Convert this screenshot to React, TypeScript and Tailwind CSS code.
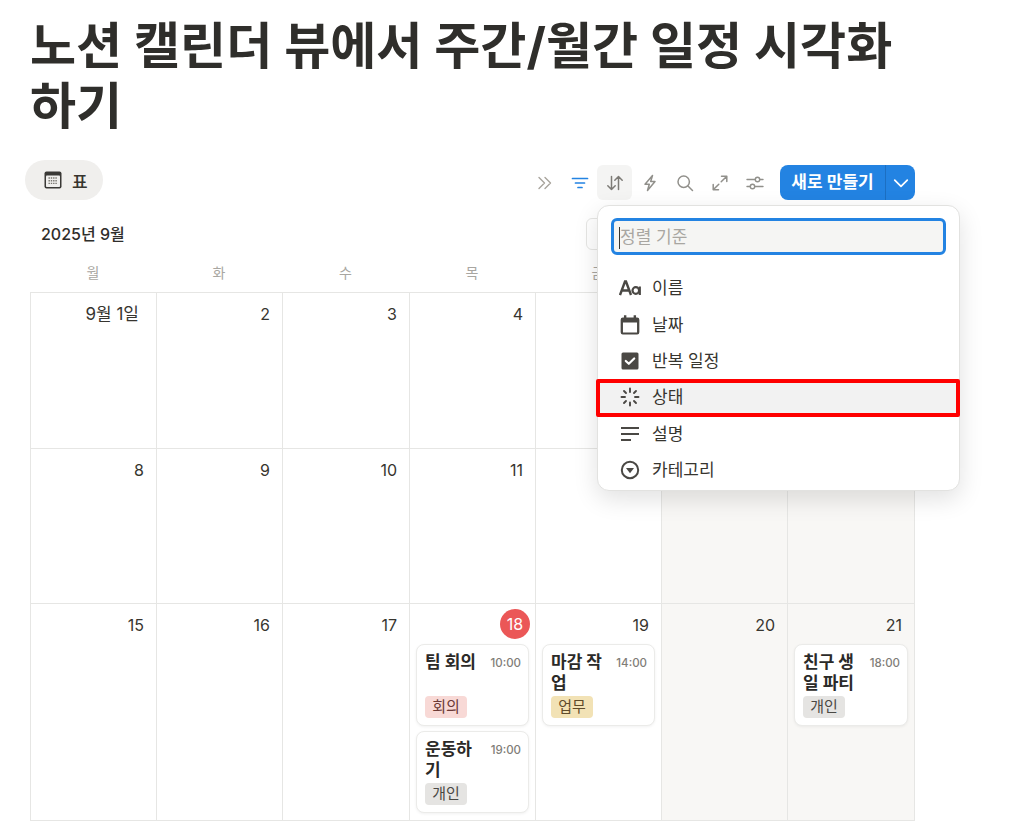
import React from "react";

const font = { fontFamily: 'Inter, "Noto Sans CJK KR", sans-serif' };

const ToolIcon = ({ children, active }: { children: React.ReactNode; active?: boolean }) => (
  <div className={`w-[35px] h-[35px] flex items-center justify-center rounded-md ${active ? "bg-[#f4f4f3]" : ""}`}>{children}</div>
);

const stroke = { fill: "none", stroke: "#91908b", strokeWidth: 1.5, strokeLinecap: "round" as const, strokeLinejoin: "round" as const };

const Toolbar = () => (
  <div className="flex items-center">
    <ToolIcon>
      <svg width="20" height="20" viewBox="0 0 20 20" {...stroke} stroke="#a8a49c" strokeWidth={1.4}>
        <path d="M4 4.500 9.500 10 4 15.500M10 4.500 15.500 10 10 15.500" />
      </svg>
    </ToolIcon>
    <ToolIcon>
      <svg width="20" height="20" viewBox="0 0 20 20" fill="none" stroke="#2383e2" strokeWidth="1.7" strokeLinecap="round">
        <path d="M2.500 5.500h15M5.500 10h9M8 14.500h4" />
      </svg>
    </ToolIcon>
    <ToolIcon active>
      <svg width="20" height="20" viewBox="0 0 20 20" {...stroke} stroke="#7d7b76">
        <path d="M6.500 3.500v13M2.800 12.800l3.700 3.700 3.700-3.700M13.500 16.500v-13M9.800 7.200l3.700-3.700 3.700 3.700" />
      </svg>
    </ToolIcon>
    <ToolIcon>
      <svg width="20" height="20" viewBox="0 0 20 20" {...stroke}>
        <path d="M12.500 2.500 5 11.200h4.300l-1.800 6.300 7.500-9h-4.300z" />
      </svg>
    </ToolIcon>
    <ToolIcon>
      <svg width="20" height="20" viewBox="0 0 20 20" {...stroke}>
        <circle cx="8.700" cy="8.700" r="5.700" />
        <path d="m13 13 4.500 4.500" />
      </svg>
    </ToolIcon>
    <ToolIcon>
      <svg width="20" height="20" viewBox="0 0 20 20" {...stroke}>
        <path d="M11.500 3.200h5.300v5.300M16.800 3.200l-5.600 5.600M8.500 16.800H3.200v-5.300M3.200 16.800l5.600-5.600" />
      </svg>
    </ToolIcon>
    <ToolIcon>
      <svg width="20" height="20" viewBox="0 0 20 20" {...stroke} strokeWidth={1.4}>
        <path d="M2 6.500h8M15 6.500h3M2 13.500h3M10 13.500h8" />
        <circle cx="12.500" cy="6.500" r="2.200" />
        <circle cx="7.500" cy="13.500" r="2.200" />
      </svg>
    </ToolIcon>
  </div>
);

const tagStyles: Record<string, string> = {
  회의: "bg-[#f8d9d6] text-[#6b3a36]",
  업무: "bg-[#f2e2b5] text-[#5f4b2a]",
  개인: "bg-[#e5e4e2] text-[#4a4844]",
};

const Card = ({ title, time, tag }: { title: string; time: string; tag: string }) => (
  <div className="h-[82px] rounded-lg bg-white border border-[#ebebe9] shadow-[0_1px_3px_rgba(0,0,0,0.06)] pl-2 pr-[7px] pt-[7px] pb-[7px] flex flex-col">
    <div className="flex items-start justify-between">
      <div className="w-[56px] text-[17px] leading-[21px] font-bold text-[#2b2a28]">{title}</div>
      <div className="pt-[1px] text-[11.5px] leading-[21px] font-medium text-[#7f7d78] shrink-0">{time}</div>
    </div>
    <div className="mt-auto">
      <span className={`inline-flex items-center justify-center w-[42px] h-[22px] rounded text-[15px] ${tagStyles[tag]}`}>{tag}</span>
    </div>
  </div>
);

type CellData = { label: string; today?: boolean; weekend?: boolean; wide?: boolean; cards?: { title: string; time: string; tag: string }[] };

const Cell = ({ c }: { c: CellData }) => (
  <div className={`border-l border-[#e6e6e4] ${c.weekend ? "bg-[#f8f7f5]" : "bg-white"} min-w-0 pl-[6px] pr-[6px]`}>
    <div className="h-[40px] flex items-start justify-end pt-[6px]">
      {c.today ? (
        <span className="w-[30px] h-[30px] -mt-[1px] -mr-[1px] rounded-full bg-[#eb5757] text-white text-[16px] flex items-center justify-center">{c.label}</span>
      ) : (
        <span className={`leading-[30px] text-[#37352f] ${c.wide ? "text-[17px] pr-[11px]" : "text-[16px] pr-[6px]"}`}>{c.label}</span>
      )}
    </div>
    <div className="flex flex-col gap-[5px]">
      {c.cards?.map((k) => <Card key={k.title} {...k} />)}
    </div>
  </div>
);

const rows: { h: string; cells: CellData[] }[] = [
  {
    h: "h-[156px]",
    cells: [
      { label: "9월 1일", wide: true }, { label: "2" }, { label: "3" }, { label: "4" }, { label: "5" },
      { label: "6", weekend: true }, { label: "7", weekend: true },
    ],
  },
  {
    h: "h-[155px]",
    cells: [
      { label: "8" }, { label: "9" }, { label: "10" }, { label: "11" }, { label: "12" },
      { label: "13", weekend: true }, { label: "14", weekend: true },
    ],
  },
  {
    h: "h-[217px]",
    cells: [
      { label: "15" }, { label: "16" }, { label: "17" },
      {
        label: "18",
        today: true,
        cards: [
          { title: "팀 회의", time: "10:00", tag: "회의" },
          { title: "운동하기", time: "19:00", tag: "개인" },
        ],
      },
      { label: "19", cards: [{ title: "마감 작업", time: "14:00", tag: "업무" }] },
      { label: "20", weekend: true },
      { label: "21", weekend: true, cards: [{ title: "친구 생일 파티", time: "18:00", tag: "개인" }] },
    ],
  },
];

const ic = "#4a4844";
const menuItems: { label: string; icon: React.ReactNode; hl?: boolean }[] = [
  {
    label: "이름",
    icon: (
      <svg width="22" height="16" viewBox="0 0 22 16" fill="none" stroke={ic} strokeWidth="2.400">
        <path d="M1 15 6 1.500h1L12 15M2.800 10.500h7.600" />
        <circle cx="16.800" cy="10.500" r="3.300" strokeWidth="2.200" />
        <path d="M20.800 6.500V15" strokeWidth="2.200" />
      </svg>
    ),
  },
  {
    label: "날짜",
    icon: (
      <svg width="22" height="22" viewBox="0 0 20 20" fill={ic}>
        <path d="M4.500 1.200h2.200v2h6.600v-2h2.200v2h1a2 2 0 0 1 2 2v11.500a2 2 0 0 1-2 2H3.500a2 2 0 0 1-2-2V5.200a2 2 0 0 1 2-2h1zM3.600 7.800v9h12.800v-9z" fillRule="evenodd" />
      </svg>
    ),
  },
  {
    label: "반복 일정",
    icon: (
      <svg width="20" height="20" viewBox="0 0 20 20">
        <rect x="1.500" y="1.500" width="17" height="17" rx="1.500" fill={ic} />
        <path d="m5.800 10 3 2.800L14.200 7.500" fill="none" stroke="#fff" strokeWidth="2.200" strokeLinecap="round" strokeLinejoin="round" />
      </svg>
    ),
  },
  {
    label: "상태",
    hl: true,
    icon: (
      <svg width="20" height="20" viewBox="0 0 20 20" fill="none" stroke={ic} strokeWidth="1.900" strokeLinecap="round">
        <path d="M10 1.500v3.500M16 4l-2 2M18.500 10h-3.500M16 16l-2-2M10 18.500V15.500M4 16l2-2M1.500 10H5M4 4l2 2" />
      </svg>
    ),
  },
  {
    label: "설명",
    icon: (
      <svg width="20" height="20" viewBox="0 0 20 20" fill="none" stroke={ic} strokeWidth="2">
        <path d="M1 4h18M1 10h18M1 16h10" />
      </svg>
    ),
  },
  {
    label: "카테고리",
    icon: (
      <svg width="20" height="20" viewBox="0 0 20 20">
        <circle cx="10" cy="10" r="8.200" fill="none" stroke={ic} strokeWidth="2" />
        <path d="M6 8h8l-4 5.200z" fill={ic} />
      </svg>
    ),
  },
];

const SortMenu = () => (
  <div className="absolute left-[597px] top-[205px] w-[363px] h-[286px] rounded-xl bg-white border border-[#e2e2e0] shadow-[0_8px_24px_rgba(0,0,0,0.12)] px-[13px] pt-[12px]">
    <div className="h-[37px] rounded-md bg-[#f5f5f3] border-[3px] border-[#2383e2] flex items-center pl-[5px] pt-[3px]">
      <span className="w-px h-[22px] bg-[#37352f]" />
      <span className="text-[17px] text-[#a8a6a1]">정렬 기준</span>
    </div>
    <div className="mt-[15px] -mx-[13px] flex flex-col">
      {menuItems.map((m) => (
        <div key={m.label} className={`h-[36.4px] flex items-center pl-[21px] ${m.hl ? "bg-[#f2f2f2]" : ""}`}>
          <span className="w-[22px] h-[22px] flex items-center justify-center shrink-0">{m.icon}</span>
          <span className="ml-[11px] text-[17px] leading-[24px] text-[#37352f]">{m.label}</span>
        </div>
      ))}
    </div>
  </div>
);

export default function App() {
  return (
    <div className="relative w-[1012px] h-[823px] overflow-hidden bg-white" style={font}>
      <div className="pl-[30px] pr-[90px] pt-[16px]">
        <h1 className="text-[50.1px] leading-[60px] font-bold text-[#2f2e2b]">노션 캘린더 뷰에서 주간/월간 일정 시각화 하기</h1>
      </div>

      <div className="mt-[24px] ml-[25px] w-[890px] flex items-start justify-between">
        <div className="w-[78px] h-[40px] rounded-[20px] bg-[#f0efed] flex items-center pl-[19px] gap-[10px]">
          <svg width="18" height="18" viewBox="0 0 18 18">
            <rect x="0.500" y="0.500" width="17" height="17" rx="2" fill="#3a3936" />
            <rect x="2" y="4.500" width="14" height="11.600" rx="0.800" fill="#f0efed" />
            <path d="M4.500 7h9M4.500 9.700h9M4.500 12.400h9" stroke="#77756f" strokeWidth="1.400" strokeDasharray="1.400 0.900" />
          </svg>
          <span className="pt-[5px] text-[17px] font-medium text-[#37352f]">표</span>
        </div>
        <div className="mt-[5px] flex items-center gap-[7px]">
          <Toolbar />
          <div className="ml-[1px] w-[135px] h-[35px] rounded-lg bg-[#2383e2] text-white flex items-center">
            <span className="flex-1 text-center text-[17px] font-semibold">새로 만들기</span>
            <span className="w-[30px] h-full border-l border-[#1c6fc2] flex items-center justify-center">
              <svg width="16" height="16" viewBox="0 0 14 14" fill="none" stroke="#fff" strokeWidth="1.500" strokeLinecap="round" strokeLinejoin="round">
                <path d="m1.500 4.500 5.500 5.500 5.500-5.500" />
              </svg>
            </span>
          </div>
        </div>
      </div>

      <div className="mt-[18px] ml-[30px] w-[885px]">
        <div className="relative h-[32px] pl-[11px] flex items-center">
          <span className="text-[16px] font-medium text-[#2f2e2b]">2025년 9월</span>
          <span className="absolute left-[556px] top-0 w-[40px] h-[32px] border border-[#e6e6e4] rounded-md bg-white" />
        </div>
        <div className="grid grid-cols-[126px_126px_127px_126px_126px_126px_127px] h-[42px] items-center text-center text-[14px] text-[#a8a6a1] pt-[2px]">
          {["월", "화", "수", "목", "금", "토", "일"].map((d) => <div key={d}>{d}</div>)}
        </div>
        <div className="border-t border-[#e6e6e4]">
          {rows.map((r, i) => (
            <div key={i} className={`grid grid-cols-[126px_126px_127px_126px_126px_126px_127px] ${r.h} border-b border-r border-[#e6e6e4]`}>
              {r.cells.map((c, j) => <Cell key={j} c={c} />)}
            </div>
          ))}
        </div>
      </div>

      <SortMenu />
      <div className="absolute left-[596px] top-[379px] w-[364px] h-[38px] border-[4px] border-[#ff0000] rounded-[2px]" />
    </div>
  );
}
